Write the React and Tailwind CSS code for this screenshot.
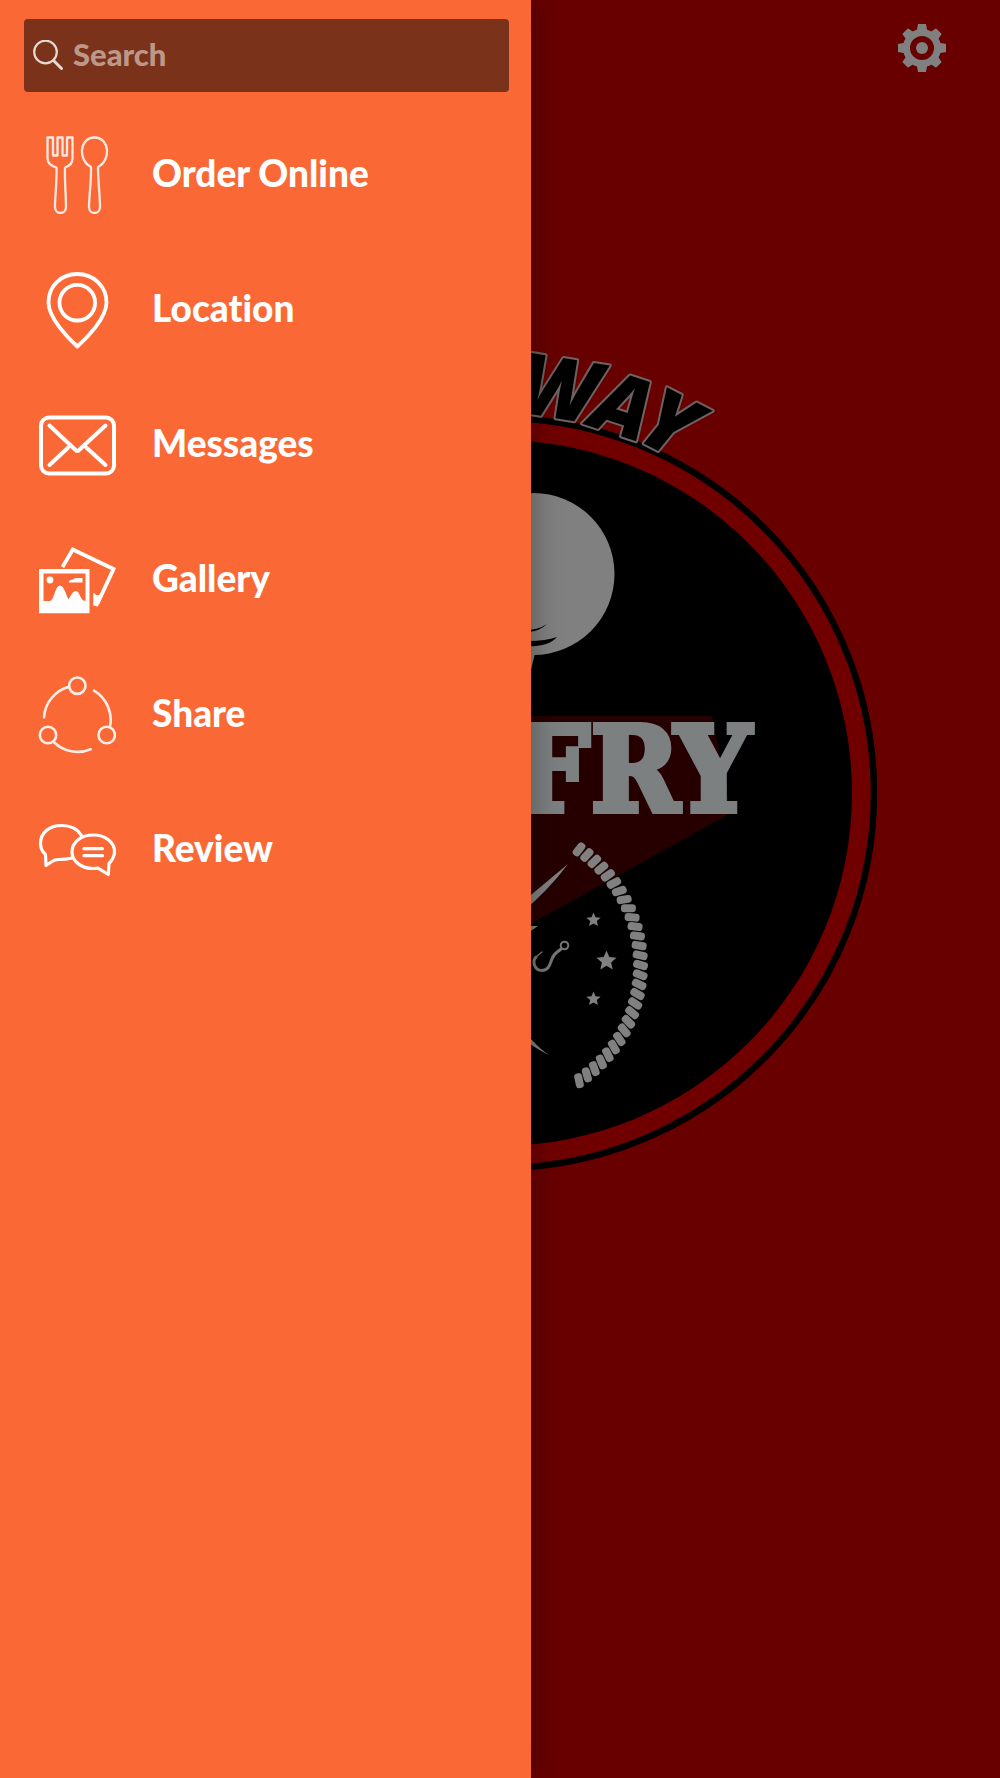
import React from "react";

const iconProps = {
  viewBox: "0 0 78 78",
  className: "size-[78px] shrink-0",
  fill: "none",
  stroke: "currentColor",
  strokeLinecap: "round",
  strokeLinejoin: "round",
  "aria-hidden": true,
};

function CutleryIcon() {
  return (
    <svg {...iconProps} strokeWidth="2.3" opacity="0.85">
      <path d="M9.500 1.500H15V19.500H19.500V1.500H24.500V19.500H29V1.500H34.500V22C34.500 27 32 30 27 31.500C26.500 45 28 60 28 71C28 79 17 79 17 71C17 60 19 45 18.500 31.500C13 30 9.500 27 9.500 22Z" />
      <path d="M53 31C40 25 41 1.500 56.500 1.500C72 1.500 73 25 60 31C60 45 62 60 62 71C62 79 51 79 51 71C51 60 53.500 45 53 31Z" />
    </svg>
  );
}

function PinIcon() {
  return (
    <svg {...iconProps} strokeWidth="3.8">
      <path d="M39.300 75.500C30 67 10.500 47 10.500 31.500C10.500 15 23 3 39.300 3C55.500 3 68.500 15 68.500 31.500C68.500 47 49 67 39.300 75.500Z" />
      <circle cx="39.300" cy="31.700" r="17.800" />
    </svg>
  );
}

function EnvelopeIcon() {
  return (
    <svg {...iconProps} strokeWidth="4">
      <rect x="3" y="11.500" width="73" height="56" rx="8" />
      <path d="M11.500 19.500L37 43.500Q39.300 46.500 41.600 43.500L67.500 19.500M11.500 59L30 41.700M67.500 59L48.500 41.700" />
    </svg>
  );
}

function GalleryIcon() {
  return (
    <svg {...iconProps} strokeWidth="3.800" strokeLinecap="butt" strokeLinejoin="miter">
      <path d="M24.500 26L34.800 8.500L75.500 28L59.500 62.500" />
      <path d="M55.300 51.500L59 54.500L64 53L60 65.500L55.300 64.500Z" fill="currentColor" stroke="none" />
      <path
        fill="currentColor"
        stroke="none"
        fillRule="evenodd"
        d="M1 28H51.500V72.300H1ZM5.500 32.500V60H12C16 60 17 44.500 22 44.500C26 44.500 28 54 30.500 58.500C33 54 35 50 38 50C42 50 42 60 47.500 60V32.500Z"
      />
      <circle cx="12" cy="39" r="3.400" fill="currentColor" stroke="none" />
      <path d="M31 41Q31 38.500 35 38.500Q36 37 38 37H44.500V41.500H31Z" fill="currentColor" stroke="none" />
    </svg>
  );
}

function ShareIcon() {
  return (
    <svg {...iconProps} strokeWidth="2.600" opacity="0.88">
      <circle cx="39.300" cy="9.700" r="8.200" />
      <circle cx="10" cy="59" r="8.200" />
      <circle cx="68.700" cy="59" r="8.200" />
      <path d="M31 10.700A34 34 0 0 0 6 41.300M56 14.700A34 34 0 0 1 72 50.700M16 66.300A34 34 0 0 0 52.700 73.300" />
    </svg>
  );
}

function ChatIcon() {
  return (
    <svg {...iconProps} strokeWidth="3.200">
      <path d="M43.500 24.500C39 17 32 14.500 23.500 14.500C11 14.500 2.500 22 2.500 32.500C2.500 38 4.500 41 7.500 43.500L8 54.500L14 50.500Q17 48.300 21 48.500Q28 48.500 34.300 47" />
      <path d="M71 52.500C75 48.500 76.500 45 76.500 40.500C76.500 31 67 24 55.300 24C43 24 34 31 34 41C34 50 43 57.500 55.300 57.500L60 57.200L70.300 63.500Z" />
      <path d="M46 37.700H64.500M46 44.700H64.500" />
    </svg>
  );
}

function GearIcon() {
  return (
    <svg viewBox="-24 -24 48 48" className="size-12" fill="currentColor" aria-hidden="true">
      <mask id="gear-hole">
        <rect x="-24" y="-24" width="48" height="48" fill="white" />
        <circle r="14" fill="black" />
      </mask>
      {[0, 45, 90, 135].map((a) => (
        <path key={a} d="M-4 -24H4L5.500 -16V16L4 24H-4L-5.500 16V-16Z" mask="url(#gear-hole)" transform={`rotate(${a})`} />
      ))}
      <circle r="15.500" fill="none" stroke="currentColor" strokeWidth="7" />
      <circle r="6" />
    </svg>
  );
}

const tiltStops = [
  [0, -52],
  [0.15, -34],
  [0.3, 4],
  [0.45, 11],
  [0.65, 36],
  [0.8, 58],
  [1, 78],
];

function tiltAt(t) {
  const i = Math.max(1, tiltStops.findIndex(([s]) => s >= t));
  const [t0, a0] = tiltStops[i - 1];
  const [t1, a1] = tiltStops[i];
  return a0 + ((a1 - a0) * (t - t0)) / (t1 - t0);
}

const ropeStrands = Array.from({ length: 29 }, (_, i) => {
  const t = i / 28;
  const a = ((-56 + 112 * t) * Math.PI) / 180;
  return {
    x: 501 + 139.5 * Math.cos(a),
    y: 966 + 139.5 * Math.sin(a),
    tilt: tiltAt(t),
  };
});

const stars = [
  { x: 593.5, y: 921, s: 7.5 },
  { x: 606.5, y: 962, s: 10.5 },
  { x: 593.5, y: 1000, s: 7.5 },
];

const arcLetters = [
  { ch: "W", x: 554, y: 419, r: 9 },
  { ch: "A", x: 614, y: 435, r: 18 },
  { ch: "Y", x: 656, y: 451, r: 27 },
];

function Logo() {
  return (
    <svg viewBox="120 340 760 836" className="w-[76%]" role="img" aria-label="Way Fry logo">
      <circle cx="499" cy="794" r="378" fill="#700000" />
      <circle cx="499" cy="794" r="375" fill="none" stroke="#000" strokeWidth="6.500" />
      <circle cx="499" cy="794" r="353" fill="#000" />

      <g
        fontFamily="'Open Sans', sans-serif"
        fontWeight="800"
        fontStyle="italic"
        fontSize="85"
        textAnchor="middle"
        fill="#000"
        stroke="#6f6262"
        strokeWidth="4"
        paintOrder="stroke"
        strokeLinejoin="round"
      >
        {arcLetters.map((l) => (
          <text key={l.ch} transform={`translate(${l.x} ${l.y}) rotate(${l.r})`}>
            {l.ch}
          </text>
        ))}
      </g>

      <circle cx="533.500" cy="575" r="81" fill="#808080" />
      <path d="M520 650H536L531 671H520Z" fill="#808080" />
      <path d="M510 630Q534 634 547 625Q540 632 528 633Z" fill="#000" />
      <path d="M510 641Q540 644 557 638Q548 649 520 647Z" fill="#000" />

      <path d="M500 717H712L731 814L500 942Z" fill="#260000" />
      <g
        fontFamily="'DejaVu Serif Condensed', 'DejaVu Serif', serif"
        fontWeight="700"
        fontSize="118"
        textAnchor="middle"
        fill="#7d8080"
        stroke="#7d8080"
        strokeWidth="6"
      >
        <text y="812">
          <tspan x="552">F</tspan>
          <tspan x="635">R</tspan>
          <tspan x="713">Y</tspan>
        </text>
      </g>

      <g fill="#808080">
        <path d="M520 905L568 865Q548 892 520 915Z" />
        <path d="M520 1033L531 1040Q540 1050 549 1056Q538 1051 520 1038Z" />
        <path d="M525 927H538L528 934Z" />
        {ropeStrands.map((s, i) => (
          <rect key={i} x="-7.500" y="-4" width="15" height="8" rx="3.500" transform={`translate(${s.x} ${s.y}) rotate(${s.tilt})`} />
        ))}
        {stars.map((s, i) => (
          <path
            key={i}
            d="M0 -1L.27 -.37L.95 -.31L.44 .14L.59 .81L0 .46L-.59 .81L-.44 .14L-.95 -.31L-.27 -.37Z"
            transform={`translate(${s.x} ${s.y}) scale(${s.s})`}
          />
        ))}
      </g>
      <g fill="none" stroke="#777" strokeLinecap="round">
        <circle cx="564.500" cy="946.500" r="3.800" strokeWidth="2" />
        <path d="M561 950L556 954C549 960 552 971 542 971.500C534 971.500 532 962 536 958" strokeWidth="3" />
        <path d="M536 958L542 953" strokeWidth="1.500" />
      </g>
    </svg>
  );
}

const items = [
  { label: "Order Online", Icon: CutleryIcon },
  { label: "Location", Icon: PinIcon },
  { label: "Messages", Icon: EnvelopeIcon },
  { label: "Gallery", Icon: GalleryIcon },
  { label: "Share", Icon: ShareIcon },
  { label: "Review", Icon: ChatIcon },
];

export default function App() {
  return (
    <div className="relative min-h-screen overflow-hidden bg-[#680000] font-['Lato',sans-serif] [font-variant-ligatures:none]">
      <main>
        <header className="flex justify-end pt-6 pr-[54px]">
          <button type="button" aria-label="Settings" className="text-[#808080]">
            <GearIcon />
          </button>
        </header>
        <div className="mt-[267px] flex justify-center">
          <Logo />
        </div>
      </main>

      <aside className="absolute inset-y-0 left-0 w-[53.1%] bg-[#fa6935] pt-[19px] pr-[22px] pl-6 text-white shadow-[2px_0_28px_rgba(0,0,0,0.3)]">
        <label className="flex h-[73px] w-full items-center gap-2 rounded-[4px] bg-[#7b321a] pr-2 pl-[9px]">
          <svg viewBox="0 0 32 32" className="size-8 shrink-0" fill="none" stroke="#e6d9d4" strokeLinecap="round" aria-hidden="true">
            <circle cx="12.500" cy="12" r="11.300" strokeWidth="2.200" />
            <path d="M20.500 20.500L28.500 28.500" strokeWidth="3" />
          </svg>
          <input
            type="text"
            aria-label="Search"
            placeholder="Search"
            className="w-full min-w-0 bg-transparent pb-1 text-[31px] leading-9 font-black outline-none placeholder:text-[#bd9889]"
          />
        </label>
        <nav className="mt-[15px]">
          <ul>
            {items.map(({ label, Icon }) => (
              <li key={label}>
                <a href="#" className="flex h-[135px] items-center gap-9 pl-[14px] text-[37px] leading-none font-black">
                  <Icon />
                  <span className="pb-1">{label}</span>
                </a>
              </li>
            ))}
          </ul>
        </nav>
      </aside>
    </div>
  );
}
